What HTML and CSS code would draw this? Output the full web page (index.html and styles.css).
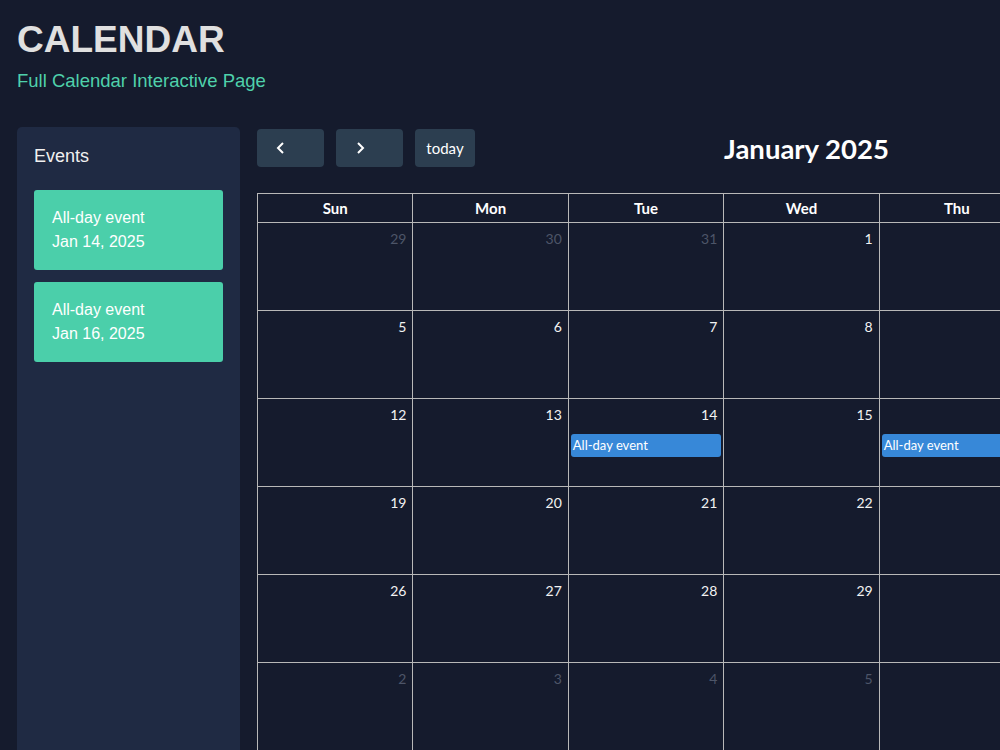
FILE: index.html
```html
<!DOCTYPE html>
<html lang="en">
<head>
    <meta charset="UTF-8">
    <meta name="viewport" content="width=device-width, initial-scale=1.0">
    <title>Calendar</title>
    <link rel="stylesheet" href="styles.css">
</head>
<body>
    <div class="page">
        <header class="header">
            <h1>CALENDAR</h1>
            <p class="subtitle">Full Calendar Interactive Page</p>
        </header>
        <div class="main">
            <aside class="sidebar">
                <h2>Events</h2>
                <div class="event-card">
                    <div>All-day event</div>
                    <div>Jan 14, 2025</div>
                </div>
                <div class="event-card">
                    <div>All-day event</div>
                    <div>Jan 16, 2025</div>
                </div>
            </aside>
            <section class="calendar">
                <div class="toolbar">
                    <div class="toolbar-left">
                        <button class="btn btn-nav" aria-label="prev">
                            <svg width="14" height="14" viewBox="0 0 14 14"><path d="M9 2 L4 7 L9 12" fill="none" stroke="#fff" stroke-width="2"/></svg>
                        </button>
                        <button class="btn btn-nav" aria-label="next">
                            <svg width="14" height="14" viewBox="0 0 14 14"><path d="M5 2 L10 7 L5 12" fill="none" stroke="#fff" stroke-width="2"/></svg>
                        </button>
                        <button class="btn btn-today">today</button>
                    </div>
                    <h2 class="toolbar-title">January 2025</h2>
                    <div></div>
                </div>
                <table class="month">
                    <thead>
                        <tr><th>Sun</th><th>Mon</th><th>Tue</th><th>Wed</th><th>Thu</th><th>Fri</th><th>Sat</th></tr>
                    </thead>
                    <tbody>
                        <tr>
                            <td class="other"><div class="num">29</div></td>
                            <td class="other"><div class="num">30</div></td>
                            <td class="other"><div class="num">31</div></td>
                            <td><div class="num">1</div></td>
                            <td><div class="num">2</div></td>
                            <td><div class="num">3</div></td>
                            <td><div class="num">4</div></td>
                        </tr>
                        <tr>
                            <td><div class="num">5</div></td>
                            <td><div class="num">6</div></td>
                            <td><div class="num">7</div></td>
                            <td><div class="num">8</div></td>
                            <td><div class="num">9</div></td>
                            <td><div class="num">10</div></td>
                            <td><div class="num">11</div></td>
                        </tr>
                        <tr>
                            <td><div class="num">12</div></td>
                            <td><div class="num">13</div></td>
                            <td><div class="num">14</div><div class="event">All-day event</div></td>
                            <td><div class="num">15</div></td>
                            <td><div class="num">16</div><div class="event">All-day event</div></td>
                            <td><div class="num">17</div></td>
                            <td><div class="num">18</div></td>
                        </tr>
                        <tr>
                            <td><div class="num">19</div></td>
                            <td><div class="num">20</div></td>
                            <td><div class="num">21</div></td>
                            <td><div class="num">22</div></td>
                            <td><div class="num">23</div></td>
                            <td><div class="num">24</div></td>
                            <td><div class="num">25</div></td>
                        </tr>
                        <tr>
                            <td><div class="num">26</div></td>
                            <td><div class="num">27</div></td>
                            <td><div class="num">28</div></td>
                            <td><div class="num">29</div></td>
                            <td><div class="num">30</div></td>
                            <td><div class="num">31</div></td>
                            <td class="other"><div class="num">1</div></td>
                        </tr>
                        <tr>
                            <td class="other"><div class="num">2</div></td>
                            <td class="other"><div class="num">3</div></td>
                            <td class="other"><div class="num">4</div></td>
                            <td class="other"><div class="num">5</div></td>
                            <td class="other"><div class="num">6</div></td>
                            <td class="other"><div class="num">7</div></td>
                            <td class="other"><div class="num">8</div></td>
                        </tr>
                    </tbody>
                </table>
            </section>
        </div>
    </div>
</body>
</html>
```

FILE: styles.css
```css
html, body {
    margin: 0;
    height: 100%;
    overflow: hidden;
}
body {
    font-family: "Liberation Sans", Arial, sans-serif;
    background: #151b2d;
    color: #e2e2e2;
}
.page {
    padding: 0 17px;
}
.header h1 {
    margin: 0;
    padding-top: 19px;
    font-size: 37px;
    line-height: 42px;
    font-weight: bold;
    color: #e0e0e0;
}
.subtitle {
    margin: 9px 0 0;
    font-size: 18.5px;
    line-height: 22px;
    color: #4fd1ab;
}
.main {
    display: flex;
    gap: 17px;
    margin-top: 35px;
}
.sidebar {
    flex: 0 0 223px;
    box-sizing: border-box;
    background: #1f2a43;
    border-radius: 5px;
    padding: 17px 17px;
    min-height: 700px;
}
.sidebar h2 {
    margin: 0 0 22px;
    font-size: 18px;
    font-weight: normal;
    line-height: 24px;
    color: #f0f0f0;
}
.event-card {
    background: #4bcfaa;
    border-radius: 3px;
    padding: 16px 18px;
    margin-bottom: 12px;
    font-size: 16px;
    line-height: 24px;
    color: #fff;
}
.calendar {
    flex: 0 0 1089px;
    font-family: Lato, "Noto Sans", sans-serif;
    margin-top: 2px;
}
.toolbar {
    display: grid;
    grid-template-columns: 1fr auto 1fr;
    align-items: center;
    margin-bottom: 26px;
}
.toolbar-left {
    display: flex;
    gap: 12px;
}
.btn {
    height: 38px;
    border: none;
    border-radius: 4px;
    background: #2c3e50;
    color: #fff;
    font-family: inherit;
    font-size: 15px;
    cursor: pointer;
    display: flex;
    align-items: center;
    justify-content: center;
}
.btn-nav {
    width: 67px;
    justify-content: flex-start;
    padding-left: 17px;
}
.btn-today {
    width: 60px;
}
.toolbar-title {
    margin: 0 0 0 10px;
    font-size: 27.5px;
    font-weight: bold;
    color: #fff;
}
.month {
    border-collapse: collapse;
    table-layout: fixed;
    width: 1089px;
}
.month th, .month td {
    border: 1px solid #b8b8b8;
}
.month th {
    height: 28px;
    padding: 0;
    font-size: 15px;
    font-weight: bold;
    color: #fff;
}
.month td {
    height: 87px;
    padding: 0;
    vertical-align: top;
}
.num {
    text-align: right;
    padding: 6px 6px 0 0;
    font-size: 14px;
    line-height: 20px;
    color: #f2f2f2;
}
.other .num {
    color: #4d5568;
}
.event {
    margin: 9px 2px 0 2px;
    height: 23px;
    line-height: 23px;
    padding-left: 2px;
    background: #3788d8;
    border-radius: 3px;
    font-size: 13px;
    color: #fff;
}
```
